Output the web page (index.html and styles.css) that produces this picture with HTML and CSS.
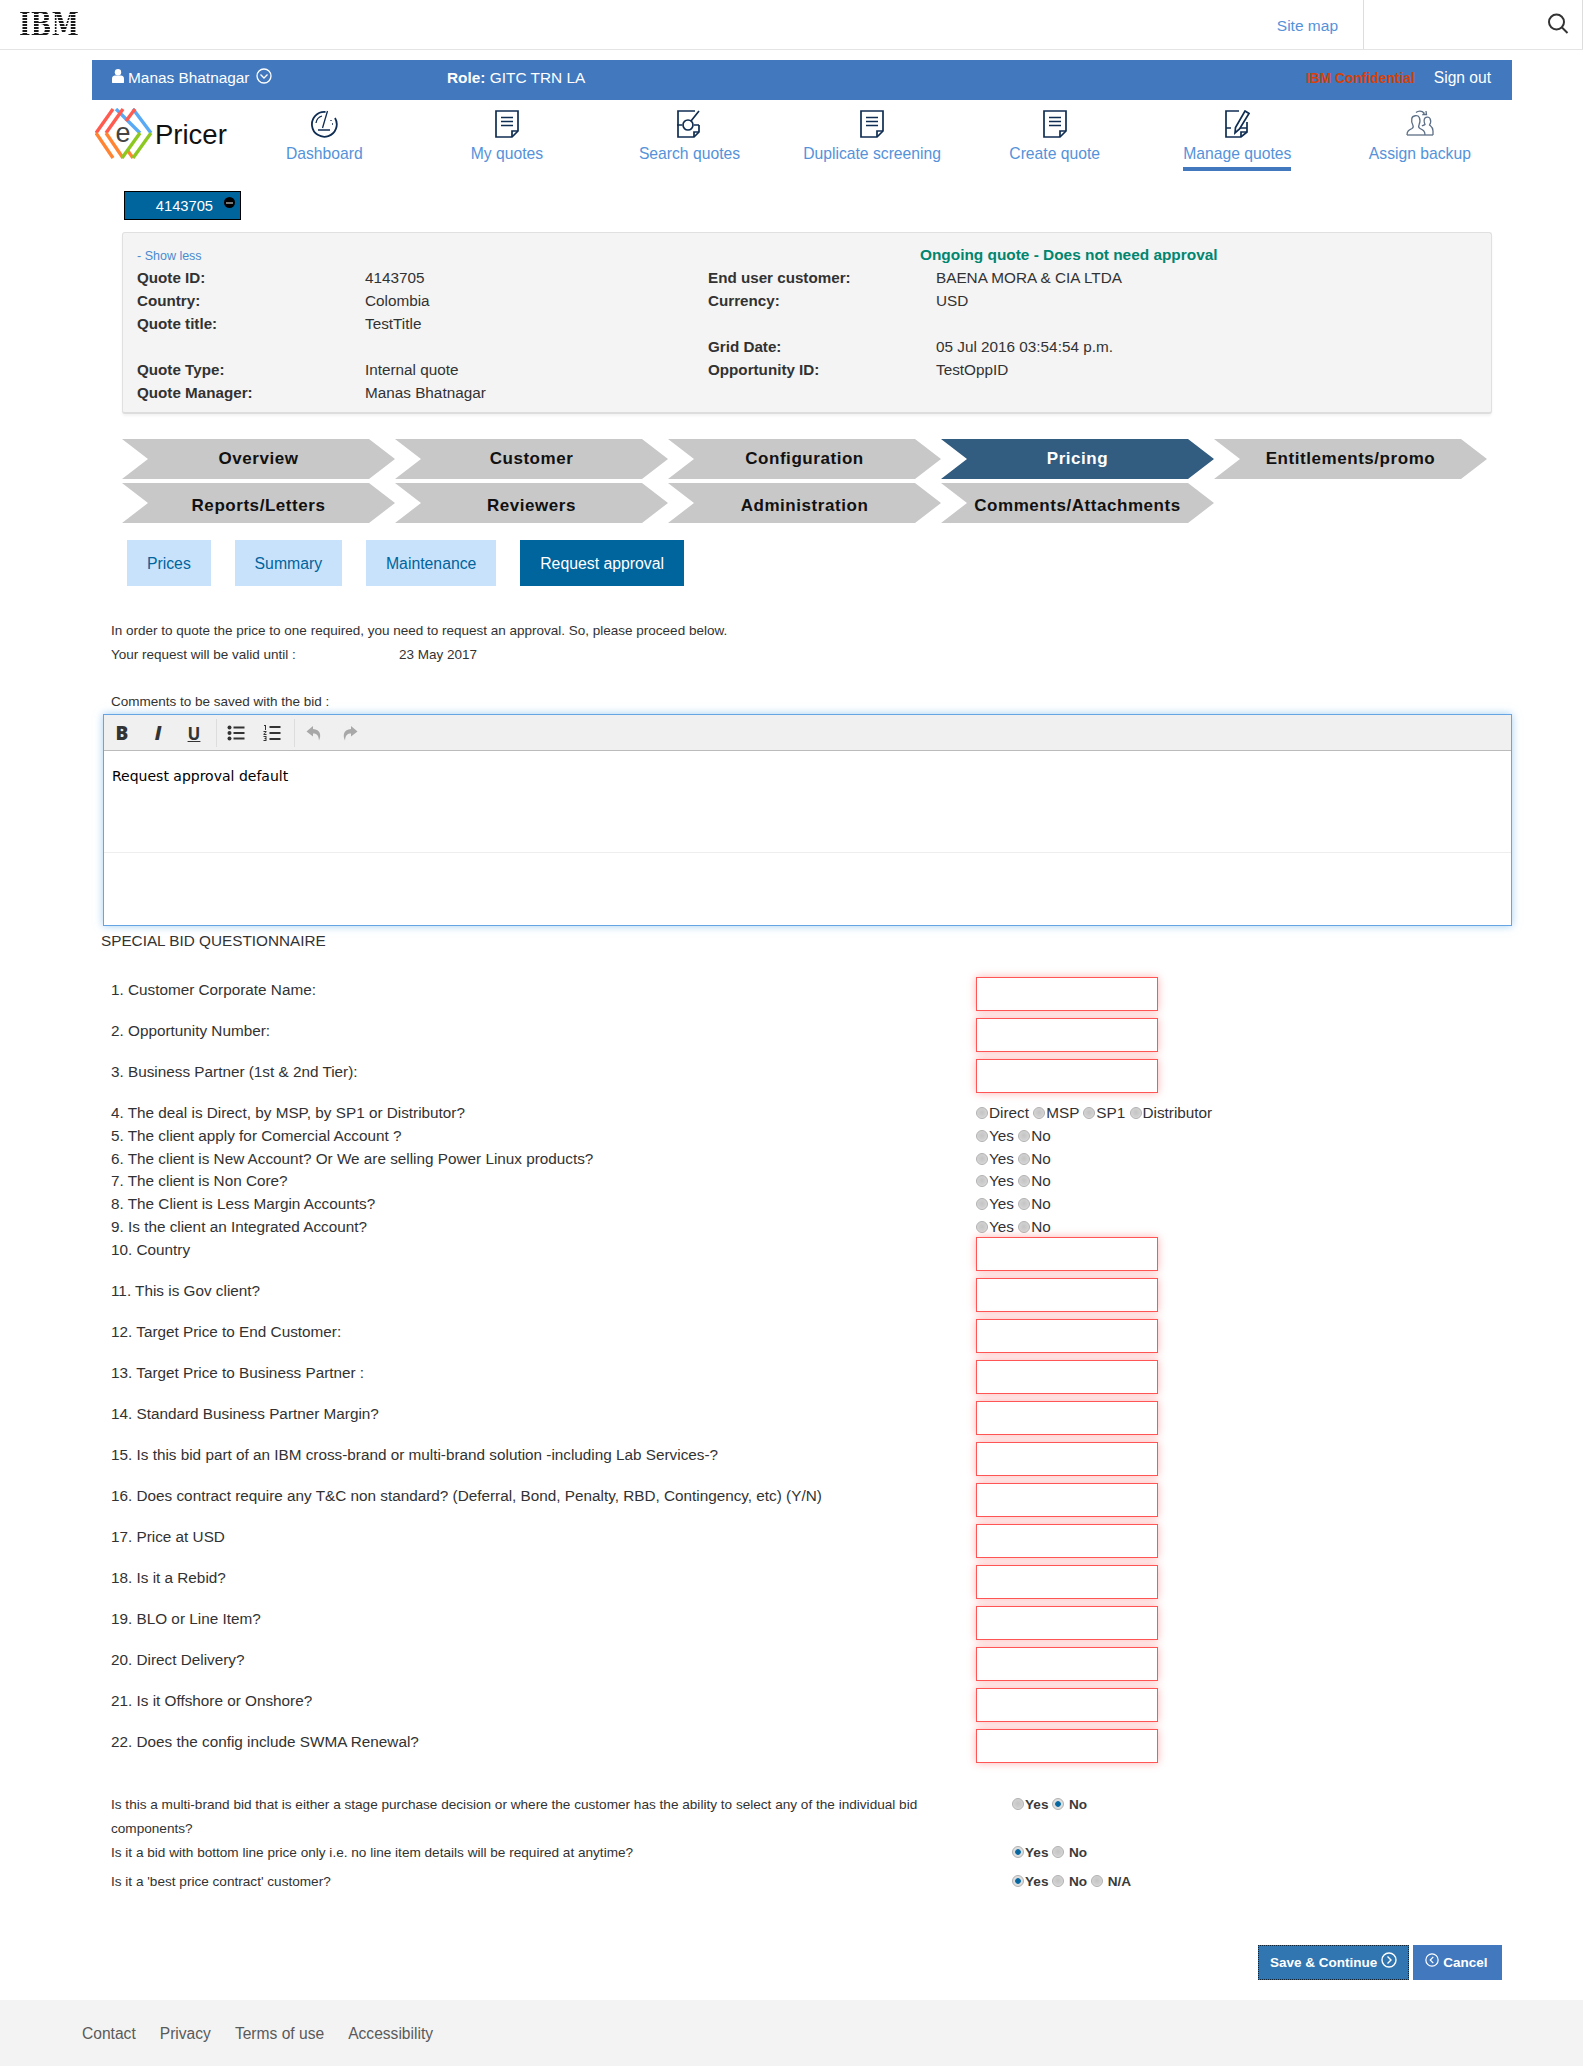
FILE: index.html
```html
<!DOCTYPE html>
<html lang="en">
<head>
  <meta charset="UTF-8">
  <title>ePricer - Request approval</title>
  <link rel="stylesheet" href="styles.css">
</head>
<body>

  <header class="masthead">
    <div class="ibm-logo"><span>IBM</span></div>
    <div class="masthead-links"><a href="#">Site map</a></div>
    <div class="masthead-search">
      <svg width="22" height="22" viewBox="0 0 22 22" fill="none" stroke="#333" stroke-width="2"><circle cx="9.5" cy="9" r="7.5"/><path d="M15 14.5l5.5 5.5"/></svg>
    </div>
  </header>

  <div class="page">
    <div class="userbar">
      <div class="user">
        <svg class="user-icon" width="12" height="14" viewBox="0 0 12 14" fill="#fff"><circle cx="6" cy="3.3" r="3.2"/><path d="M0 13.500V9.500c0-2 1.500-3 3-3h6c1.500 0 3 1 3 3v4c0 .3-.2.500-.5.500H.5c-.3 0-.5-.2-.5-.5z"/></svg>
        Manas Bhatnagar
        <svg class="circle-icon" width="16" height="16" viewBox="0 0 16 16" fill="none" stroke="#fff" stroke-width="1.3"><circle cx="8" cy="8" r="7"/><path d="M4.5 6.500L8 10l3.500-3.500"/></svg>
      </div>
      <div class="role"><b>Role:</b> GITC TRN LA</div>
      <div class="confidential">IBM Confidential</div>
      <a class="signout" href="#">Sign out</a>
    </div>

    <div class="brandnav">
      <div class="brand">
        <svg width="58" height="51" viewBox="0 0 58 51" fill="none" stroke-width="3.4">
          <path d="M21 1L45 25" stroke="#5aa9f5"/>
          <path d="M38 1L56 25" stroke="#5aa9f5"/>
          <path d="M18 1L1 25" stroke="#ff5b4f"/>
          <path d="M28 1L11 25" stroke="#ff5b4f"/>
          <path d="M40 1L31 13" stroke="#ff5b4f"/>
          <path d="M1 25L18 50" stroke="#ff8533"/>
          <path d="M11 25L28 50" stroke="#ff8533"/>
          <path d="M33 43L38 50" stroke="#ff8533"/>
          <path d="M56 25L38 50" stroke="#8cc820"/>
          <path d="M45 25L27 50" stroke="#8cc820"/>
          <text x="20.5" y="34" class="brand-e">e</text>
        </svg>
        <span class="brand-name">Pricer</span>
      </div>
      <nav class="mainnav">
        <a class="navitem" href="#">
          <svg width="28" height="28" viewBox="0 0 28 28" fill="none" stroke="#0f2d52" stroke-width="1.8"><path d="M15.500 2A12.400 12.400 0 1 0 25 8"/><path d="M6 13a8.500 8.500 0 0 1 6-7M8 20h12" stroke-width="1.3"/><path d="M12.500 18L17.500 1" stroke-width="1.3"/><path d="M21 10v1M22 14h1" stroke-width="1.3"/></svg>
          <span>Dashboard</span>
        </a>
        <a class="navitem" href="#">
          <svg width="26" height="28" viewBox="0 0 26 28" fill="none" stroke="#0f2d52" stroke-width="1.7"><path d="M2 1h22v20l-6 6H2z"/><path d="M24 21h-6v6"/><path d="M7 7.500h12M7 11.500h12M7 15.500h12"/></svg>
          <span>My quotes</span>
        </a>
        <a class="navitem" href="#">
          <svg width="26" height="28" viewBox="0 0 26 28" fill="none" stroke="#0f2d52" stroke-width="1.7"><path d="M19 1H2v26h16l5-5v-7"/><circle cx="12" cy="15" r="5"/><path d="M15 11L23 1M1 15h5M18 15h5M18 27v-5h5"/></svg>
          <span>Search quotes</span>
        </a>
        <a class="navitem" href="#">
          <svg width="26" height="28" viewBox="0 0 26 28" fill="none" stroke="#0f2d52" stroke-width="1.7"><path d="M2 1h22v20l-6 6H2z"/><path d="M24 21h-6v6"/><path d="M7 7.500h12M7 11.500h12M7 15.500h12"/></svg>
          <span>Duplicate screening</span>
        </a>
        <a class="navitem" href="#">
          <svg width="26" height="28" viewBox="0 0 26 28" fill="none" stroke="#0f2d52" stroke-width="1.7"><path d="M2 1h22v20l-6 6H2z"/><path d="M24 21h-6v6"/><path d="M7 7.500h12M7 11.500h12M7 15.500h12"/></svg>
          <span>Create quote</span>
        </a>
        <a class="navitem active" href="#">
          <svg width="26" height="28" viewBox="0 0 26 28" fill="none" stroke="#0f2d52" stroke-width="1.7"><path d="M15 1H2v26h15l6-5V12"/><path d="M2 18h5M11 18h12M17 27v-5h6"/><path d="M21 1l4 2.500-9.500 15.500-4.500 4 .5-5.500z" fill="#fff"/></svg>
          <span>Manage quotes</span>
        </a>
        <a class="navitem" href="#">
          <svg width="28" height="28" viewBox="0 0 28 28" fill="none" stroke="#5d6f86" stroke-width="1.3"><path d="M1 25h26"/><path d="M1 25c0-4 2-5 5-6.500 1.500-.8 1.500-2 .8-3.500-1-2-1.500-4-1-6.500.6-3 6-4 7.500-1 .8 1.800.8 5-.3 7.500-.7 1.600-.6 2.700 1 3.500 3 1.500 5 2.500 5 6.500"/><path d="M16 16c1-1 2-.5 3-1.500-1-2.500-1.200-5 0-6.500 1.500-1.500 4-1 5 .5 1 2 .5 5-.5 6.500 1 1 3.500 2 3.500 6v4"/><path d="M10 2.500c2-1.800 6-2 8 .5l-1 1.500 3.500 0-.5-3.500"/></svg>
          <span>Assign backup</span>
        </a>
      </nav>
    </div>

    <div class="quotetab">
      <span>4143705</span>
      <i class="minus"></i>
    </div>

    <section class="summary">
      <div class="summary-top">
        <a class="showless" href="#">- Show less</a>
        <span class="status">Ongoing quote - Does not need approval</span>
      </div>
      <div class="summary-grid">
        <b>Quote ID:</b><span>4143705</span><b>End user customer:</b><span>BAENA MORA &amp; CIA LTDA</span>
        <b>Country:</b><span>Colombia</span><b>Currency:</b><span>USD</span>
        <b>Quote title:</b><span>TestTitle</span><b></b><span></span>
        <b></b><span></span><b>Grid Date:</b><span>05 Jul 2016 03:54:54 p.m.</span>
        <b>Quote Type:</b><span>Internal quote</span><b>Opportunity ID:</b><span>TestOppID</span>
        <b>Quote Manager:</b><span>Manas Bhatnagar</span><b></b><span></span>
      </div>
    </section>

    <div class="steps">
      <a class="step" href="#">Overview</a>
      <a class="step" href="#">Customer</a>
      <a class="step" href="#">Configuration</a>
      <a class="step current" href="#">Pricing</a>
      <a class="step" href="#">Entitlements/promo</a>
      <a class="step low" href="#">Reports/Letters</a>
      <a class="step low" href="#">Reviewers</a>
      <a class="step low" href="#">Administration</a>
      <a class="step low" href="#">Comments/Attachments</a>
    </div>

    <div class="subtabs">
      <a class="subtab" href="#">Prices</a>
      <a class="subtab" href="#">Summary</a>
      <a class="subtab" href="#">Maintenance</a>
      <a class="subtab current" href="#">Request approval</a>
    </div>

    <div class="intro">
      <p>In order to quote the price to one required, you need to request an approval. So, please proceed below.</p>
      <p class="valid"><span class="valid-label">Your request will be valid until :</span><span>23 May 2017</span></p>
      <p class="comments-label">Comments to be saved with the bid :</p>
    </div>

    <div class="editor">
      <div class="toolbar">
        <span class="tool tool-b">B</span>
        <span class="tool tool-i">I</span>
        <span class="tool tool-u">U</span>
        <span class="tool-sep"></span>
        <span class="tool">
          <svg width="18" height="16" viewBox="0 0 18 16" fill="#333"><circle cx="2.5" cy="2.5" r="2"/><circle cx="2.5" cy="8" r="2"/><circle cx="2.5" cy="13.5" r="2"/><path d="M6.500 1.500h11v2h-11zM6.500 7h11v2h-11zM6.500 12.500h11v2h-11z"/></svg>
        </span>
        <span class="tool">
          <svg width="18" height="16" viewBox="0 0 18 16" fill="#333"><path d="M1 0h2v5H2V1H1zM.5 6h3v1l-2 2h2v1h-3V9l2-2h-2zM.5 11h3v5h-3v-1h2v-1h-1v-1h1v-1h-2z"/><path d="M6.500 1h11v2h-11zM6.500 7h11v2h-11zM6.500 13h11v2h-11z"/></svg>
        </span>
        <span class="tool-sep"></span>
        <span class="tool">
          <svg width="16" height="16" viewBox="0 0 16 16" fill="#a8a8a8"><path d="M7 1L.5 6.500 7 11.500V8.500c3.500 0 5.500 1.500 6 7 2.500-5 1.500-11-6-11.500z"/></svg>
        </span>
        <span class="tool">
          <svg width="16" height="16" viewBox="0 0 16 16" fill="#a8a8a8"><path d="M9 1l6.500 5.500L9 11.500V8.500c-3.500 0-5.500 1.500-6 7-2.500-5-1.500-11 6-11.500z"/></svg>
        </span>
      </div>
      <div class="editor-body">Request approval default</div>
    </div>

    <h3 class="questionnaire-title">SPECIAL BID QUESTIONNAIRE</h3>

    <form class="questions">
      <div class="qrow"><label>1. Customer Corporate Name:</label><input class="qinput" type="text"></div>
      <div class="qrow"><label>2. Opportunity Number:</label><input class="qinput" type="text"></div>
      <div class="qrow"><label>3. Business Partner (1st &amp; 2nd Tier):</label><input class="qinput" type="text"></div>

      <div class="qrow radios"><label>4. The deal is Direct, by MSP, by SP1 or Distributor?</label><span class="opts"><input type="radio" name="q4">Direct <input type="radio" name="q4">MSP <input type="radio" name="q4">SP1 <input type="radio" name="q4">Distributor</span></div>
      <div class="qrow radios"><label>5. The client apply for Comercial Account ?</label><span class="opts"><input type="radio" name="q5">Yes <input type="radio" name="q5">No</span></div>
      <div class="qrow radios"><label>6. The client is New Account? Or We are selling Power Linux products?</label><span class="opts"><input type="radio" name="q6">Yes <input type="radio" name="q6">No</span></div>
      <div class="qrow radios"><label>7. The client is Non Core?</label><span class="opts"><input type="radio" name="q7">Yes <input type="radio" name="q7">No</span></div>
      <div class="qrow radios"><label>8. The Client is Less Margin Accounts?</label><span class="opts"><input type="radio" name="q8">Yes <input type="radio" name="q8">No</span></div>
      <div class="qrow radios"><label>9. Is the client an Integrated Account?</label><span class="opts"><input type="radio" name="q9">Yes <input type="radio" name="q9">No</span></div>

      <div class="qrow"><label>10. Country</label><input class="qinput" type="text"></div>
      <div class="qrow"><label>11. This is Gov client?</label><input class="qinput" type="text"></div>
      <div class="qrow"><label>12. Target Price to End Customer:</label><input class="qinput" type="text"></div>
      <div class="qrow"><label>13. Target Price to Business Partner :</label><input class="qinput" type="text"></div>
      <div class="qrow"><label>14. Standard Business Partner Margin?</label><input class="qinput" type="text"></div>
      <div class="qrow"><label>15. Is this bid part of an IBM cross-brand or multi-brand solution -including Lab Services-?</label><input class="qinput" type="text"></div>
      <div class="qrow"><label>16. Does contract require any T&amp;C non standard? (Deferral, Bond, Penalty, RBD, Contingency, etc) (Y/N)</label><input class="qinput" type="text"></div>
      <div class="qrow"><label>17. Price at USD</label><input class="qinput" type="text"></div>
      <div class="qrow"><label>18. Is it a Rebid?</label><input class="qinput" type="text"></div>
      <div class="qrow"><label>19. BLO or Line Item?</label><input class="qinput" type="text"></div>
      <div class="qrow"><label>20. Direct Delivery?</label><input class="qinput" type="text"></div>
      <div class="qrow"><label>21. Is it Offshore or Onshore?</label><input class="qinput" type="text"></div>
      <div class="qrow"><label>22. Does the config include SWMA Renewal?</label><input class="qinput" type="text"></div>

      <div class="brow first">
        <label>Is this a multi-brand bid that is either a stage purchase decision or where the customer has the ability to select any of the individual bid components?</label>
        <span class="bopts"><input type="radio" name="b1">Yes <input type="radio" name="b1" checked> No</span>
      </div>
      <div class="brow">
        <label>Is it a bid with bottom line price only i.e. no line item details will be required at anytime?</label>
        <span class="bopts"><input type="radio" name="b2" checked>Yes <input type="radio" name="b2"> No</span>
      </div>
      <div class="brow last">
        <label>Is it a 'best price contract' customer?</label>
        <span class="bopts"><input type="radio" name="b3" checked>Yes <input type="radio" name="b3"> No <input type="radio" name="b3"> N/A</span>
      </div>

      <div class="actions">
        <button class="btn btn-save" type="button">Save &amp; Continue
          <svg width="16" height="16" viewBox="0 0 16 16" fill="none" stroke="#fff" stroke-width="1.4"><circle cx="8" cy="8" r="7"/><path d="M6.500 4.500L10 8l-3.500 3.500"/></svg>
        </button>
        <button class="btn btn-cancel" type="button">
          <svg width="14" height="16" viewBox="0 0 16 16" fill="none" stroke="#fff" stroke-width="1.4"><circle cx="8" cy="8" r="7"/><path d="M9.500 4.500L6 8l3.500 3.500"/></svg>
          Cancel
        </button>
      </div>
    </form>
  </div>

  <footer class="footer">
    <a href="#">Contact</a>
    <a href="#">Privacy</a>
    <a href="#">Terms of use</a>
    <a href="#">Accessibility</a>
  </footer>

</body>
</html>
```

FILE: styles.css
```css
body {
  margin: 0;
  background-color: #fff;
  font-family: "Liberation Sans", Arial, sans-serif;
  font-size: 15.3px;
  color: #323232;
}

a {
  text-decoration: none;
}

p {
  margin: 0;
}

/* top strip */
.masthead {
  display: flex;
  height: 49px;
  border-bottom: 1px solid #e4e4e4;
}

.ibm-logo {
  flex: 1;
  padding: 9px 0 0 19px;
}

.ibm-logo span {
  display: inline-block;
  font-family: "DejaVu Serif", serif;
  font-weight: bold;
  font-size: 33px;
  line-height: 31px;
  color: transparent;
  background: repeating-linear-gradient(to bottom, #1a1a1a 0, #1a1a1a 2px, #fff 2px, #fff 3px);
  background-clip: text;
  -webkit-background-clip: text;
  transform: scaleX(0.75);
  transform-origin: left;
}

.masthead-links {
  padding-right: 25px;
  border-right: 1px solid #ddd;
  line-height: 51px;
  font-size: 15.5px;
}

.masthead-links a {
  color: #5492da;
}

.masthead-search {
  display: flex;
  justify-content: flex-end;
  width: 219px;
  padding: 13px 13px 0 0;
  box-sizing: border-box;
  border-right: 1px solid #ddd;
}

/* blue bar */
.page {
  width: 1421px;
  margin-left: 92px;
}

.userbar {
  display: flex;
  align-items: center;
  width: 1420px;
  height: 40px;
  margin-top: 10px;
  padding: 0 21px 4px 20px;
  box-sizing: border-box;
  background-color: #4178be;
  color: #fff;
  font-size: 15.4px;
}

.user {
  display: flex;
  align-items: center;
  gap: 4px;
  width: 335px;
}

.user-icon {
  margin-top: -5px;
}

.circle-icon {
  margin: -4px 0 0 2px;
}

.role {
  flex: 1;
}

.confidential {
  margin-right: 19px;
  color: #d74108;
  font-weight: bold;
  font-size: 13.8px;
}

.signout {
  color: #fff;
  font-size: 15.6px;
}

/* logo and main nav */
.brandnav {
  display: flex;
  height: 90px;
}

.brand {
  display: flex;
  width: 141px;
  padding: 8px 0 0 3px;
  box-sizing: border-box;
}

.brand-e {
  font-family: "Liberation Sans", sans-serif;
  font-size: 27px;
  fill: #444;
  stroke: none;
}

.brand-name {
  margin: 11px 0 0 2px;
  font-size: 27.5px;
  line-height: 32px;
  color: #111;
}

.mainnav {
  display: grid;
  grid-template-columns: repeat(7, 182.6px);
}

.navitem {
  display: flex;
  flex-direction: column;
  align-items: center;
  padding-top: 10px;
  color: #5492da;
  font-size: 15.7px;
}

.navitem svg {
  margin-bottom: 6px;
}

.navitem span {
  padding-bottom: 4px;
  line-height: 19px;
}

.navitem.active span {
  border-bottom: 4px solid #4178be;
}

/* quote number tab */
.quotetab {
  display: flex;
  justify-content: flex-end;
  position: relative;
  width: 117px;
  height: 29px;
  margin: 1px 0 0 32px;
  box-sizing: border-box;
  border: 1px solid #000;
  padding-right: 27px;
  background-color: #00649d;
  color: #fff;
  line-height: 28px;
  font-size: 14.7px;
}

.minus {
  position: absolute;
  top: 5px;
  right: 5px;
  width: 11px;
  height: 11px;
  border-radius: 50%;
  background-color: #000;
}

.minus::after {
  content: "";
  display: block;
  width: 7px;
  height: 2px;
  margin: 4.5px 2px;
  background-color: #777;
}

/* quote summary */
.summary {
  width: 1370px;
  height: 182px;
  margin: 12px 0 0 30px;
  padding: 13px 14px 0;
  box-sizing: border-box;
  background-color: #f4f4f4;
  border: 1px solid #e0e0e0;
  border-bottom: 2px solid #ddd;
  border-radius: 3px;
  box-shadow: 0 2px 3px rgba(0, 0, 0, 0.05);
}

.summary-top {
  display: flex;
  height: 20px;
  align-items: center;
}

.showless {
  width: 783px;
  font-size: 12.5px;
  color: #4a8bd0;
}

.status {
  color: #00856f;
  font-weight: bold;
  font-size: 15.4px;
  margin-top: -3px;
}

.summary-grid {
  display: grid;
  grid-template-columns: 228px 343px 228px 1fr;
  grid-auto-rows: 23px;
  line-height: 23px;
}

.summary-grid b {
  font-size: 15.2px;
}

.summary-grid span {
  font-size: 15.3px;
}

/* process chevrons */
.steps {
  display: grid;
  grid-template-columns: repeat(5, 273px);
  row-gap: 4px;
  margin: 25px 0 0 30px;
}

.step {
  display: flex;
  align-items: center;
  justify-content: center;
  height: 40px;
  clip-path: polygon(0 0, 247px 0, 100% 50%, 247px 100%, 0 100%, 26px 50%);
  background-color: #c8c8c8;
  color: #111;
  font-size: 17px;
  letter-spacing: 0.55px;
  font-weight: bold;
}

.step.low {
  padding-top: 6px;
  box-sizing: border-box;
}

.step.current {
  background-color: #325c80;
  color: #fff;
}

/* sub tabs */
.subtabs {
  display: flex;
  gap: 24px;
  margin: 17px 0 0 35px;
}

.subtab {
  padding: 0 19.9px;
  height: 46px;
  line-height: 47px;
  background-color: #c8e2fb;
  color: #00649d;
  font-size: 15.8px;
}

.subtab.current {
  background-color: #00649d;
  color: #fff;
}

/* intro text */
.intro {
  margin: 35px 0 0 19px;
  font-size: 13.5px;
  line-height: 20px;
}

.valid {
  display: flex;
  margin-top: 4px;
}

.valid-label {
  width: 288px;
}

.comments-label {
  margin-top: 27px;
}

/* comment editor */
.editor {
  width: 1409px;
  height: 212px;
  margin: 2px 0 0 11px;
  box-sizing: border-box;
  border: 1px solid #66a5e4;
  box-shadow: 0 0 8px rgba(102, 175, 233, 0.6);
}

.toolbar {
  display: flex;
  align-items: center;
  height: 36px;
  padding-top: 1px;
  box-sizing: border-box;
  background-color: #f0f0f0;
  border-bottom: 1px solid #bbb;
}

.tool {
  display: flex;
  align-items: center;
  justify-content: center;
  width: 36px;
  height: 20px;
  color: #333;
  font-size: 18px;
}

.tool-b {
  font-family: "Open Sans", sans-serif;
  font-weight: 800;
  font-size: 19px;
}

.tool-i {
  font-family: "Open Sans", sans-serif;
  font-style: italic;
  font-weight: 800;
  font-size: 19px;
}

.tool-u {
  font-family: "Open Sans", sans-serif;
  font-weight: bold;
  text-decoration: underline;
  font-size: 17px;
}

.tool-sep {
  width: 1px;
  height: 28px;
  margin: 0 1px 0 4px;
  background-color: #ddd;
}

.editor-body {
  height: 102px;
  padding: 17px 8px 0;
  box-sizing: border-box;
  border-bottom: 1px solid #eee;
  font-family: "DejaVu Sans", sans-serif;
  font-size: 14px;
  color: #000;
}

/* questionnaire */
.questionnaire-title {
  margin: 5px 0 0 9px;
  font-size: 15.3px;
  font-weight: normal;
  line-height: 20px;
  color: #333;
}

.questions {
  margin: 26px 0 0 19px;
}

.qrow {
  display: flex;
  height: 41px;
}

.qrow label {
  width: 865px;
  flex: 0 0 auto;
  line-height: 26px;
}

.qinput {
  width: 182px;
  height: 34px;
  padding: 0;
  box-sizing: border-box;
  background-color: #fff;
  border: 1px solid #f55;
  box-shadow: 0 0 8px rgba(255, 85, 85, 0.45);
  outline: none;
}

.qrow.radios {
  height: 22.8px;
}

.qrow.radios label,
.opts {
  line-height: 25px;
}

input[type="radio"] {
  appearance: none;
  -webkit-appearance: none;
  width: 12px;
  height: 12px;
  margin: 0 1px 0 0;
  vertical-align: -1px;
  border: 1px solid #b0b0b0;
  border-radius: 50%;
  background: radial-gradient(circle at 50% 45%, #c4c4c4 0, #d0d0d0 55%, #f0f0f0 100%);
}

input[type="radio"]:checked {
  background: radial-gradient(circle, #00649d 0, #0c6ba5 35%, #dedede 45%);
}

.brow {
  display: flex;
  align-items: flex-start;
  font-size: 13.6px;
  line-height: 24px;
}

.brow.first {
  margin-top: 23px;
}

.brow.last {
  margin-top: 5px;
}

.brow label {
  width: 816px;
  margin-right: 85px;
  flex: 0 0 auto;
}

.bopts {
  font-weight: bold;
  color: #3a3a3a;
}

.actions {
  display: flex;
  gap: 4px;
  margin: 51px 0 0 1147px;
}

.btn {
  display: flex;
  align-items: center;
  gap: 4px;
  height: 35px;
  padding: 0 12px;
  border: none;
  background-color: #4178be;
  color: #fff;
  font-family: inherit;
  font-size: 13.5px;
  font-weight: bold;
}

.btn svg {
  margin-top: -4px;
}

.btn-cancel {
  padding-right: 14px;
}

.btn-save {
  background-color: #3176b0;
  outline: 1px dotted #123;
  outline-offset: -1px;
}

/* footer */
.footer {
  display: flex;
  gap: 24px;
  height: 66px;
  margin-top: 20px;
  padding-left: 82px;
  background-color: #f3f3f3;
  line-height: 68px;
}

.footer a {
  color: #5a5a5a;
  font-size: 15.6px;
}
```
